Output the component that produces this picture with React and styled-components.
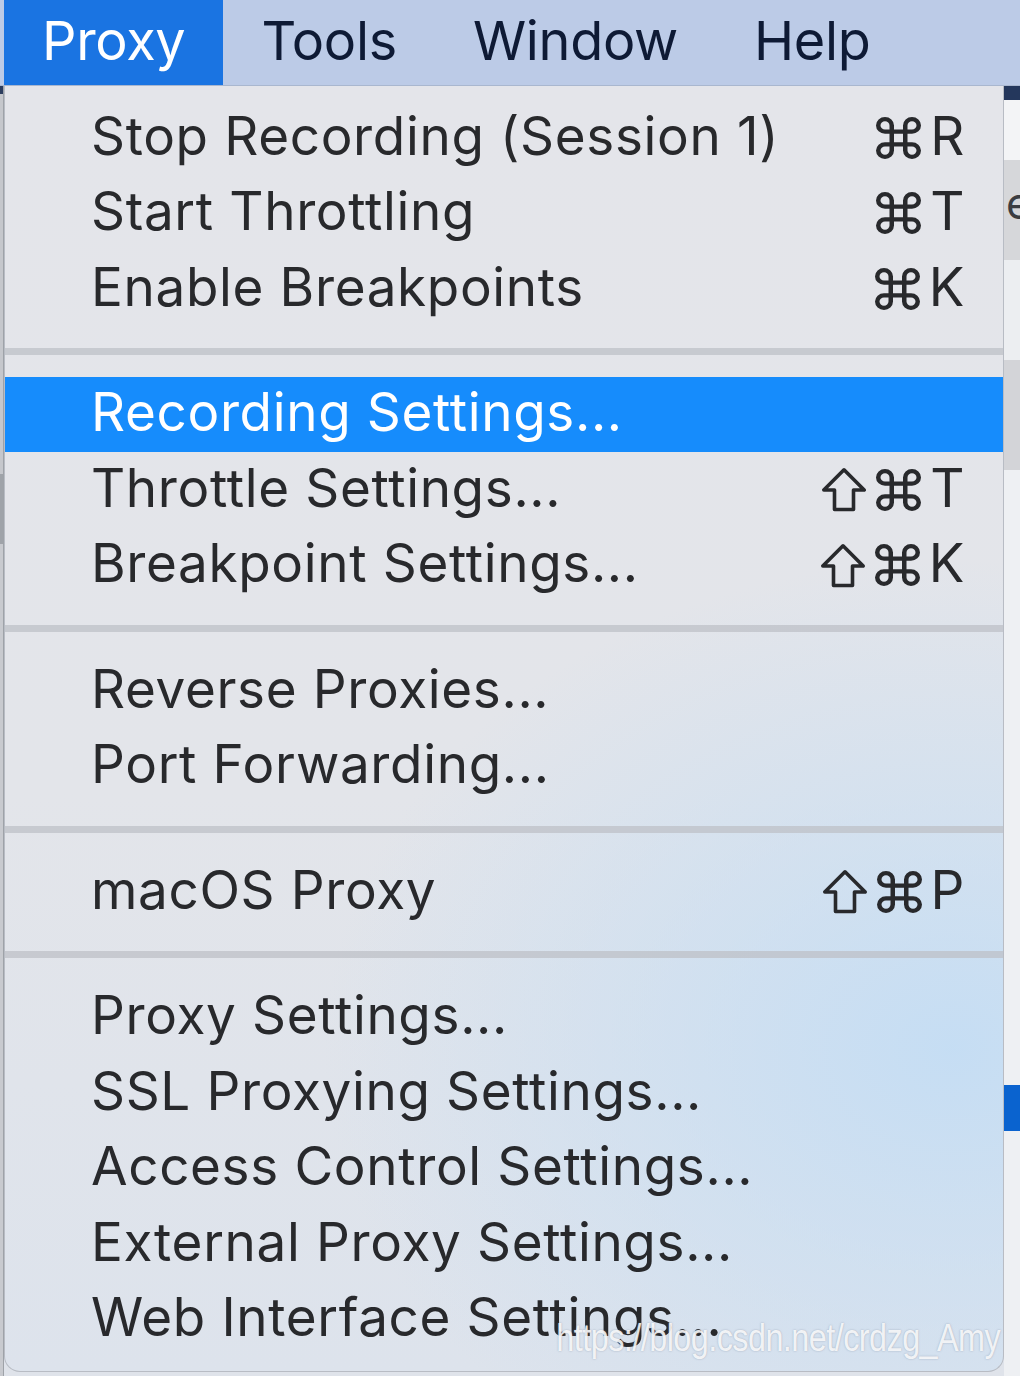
import React from 'react';
import styled, { createGlobalStyle } from 'styled-components';

const GlobalStyle = createGlobalStyle`
  html, body {
    margin: 0;
    padding: 0;
    background: #dfe3ea;
  }
  #root {
    width: 1020px;
    height: 1376px;
    overflow: hidden;
  }
`;

const Screen = styled.div`
  width: 1020px;
  height: 1376px;
  display: flex;
  flex-direction: column;
  font-family: Inter, "Liberation Sans", sans-serif;
  overflow: hidden;
`;

const MenuBar = styled.div`
  height: 86px;
  flex-shrink: 0;
  display: flex;
  align-items: stretch;
  padding-left: 4px;
  background: #bccbe7;
  border-bottom: 1px solid #a9b7cf;
  box-sizing: border-box;
`;

const BarItem = styled.div`
  display: flex;
  align-items: center;
  padding: 0 38px 4px;
  font-size: 54px;
  letter-spacing: -0.3px;
  color: ${p => (p.$active ? '#ffffff' : '#0e1a35')};
  background: ${p => (p.$active ? '#1a74e2' : 'transparent')};
`;

const Body = styled.div`
  flex: 1;
  display: flex;
  min-height: 0;
`;

const LeftStrip = styled.div`
  width: 4px;
  flex-shrink: 0;
  display: flex;
  flex-direction: column;
  background: #c7c9ce;
  border-right: 1px solid #9ea2a8;
  box-sizing: border-box;
`;

const StripBlock = styled.div`
  height: ${p => p.$h}px;
  flex-shrink: 0;
  background: ${p => p.$bg};
`;

const Menu = styled.div`
  width: 1000px;
  flex-shrink: 0;
  height: 1286px;
  box-sizing: border-box;
  padding-top: 14px;
  display: flex;
  flex-direction: column;
  border-radius: 0 0 16px 16px;
  border: 1px solid #b8bcc4;
  border-top: none;
  background:
    radial-gradient(ellipse 900px 700px at 95% 75%, rgba(196, 221, 244, 0.95), rgba(196, 221, 244, 0) 70%),
    linear-gradient(180deg, #e4e5ea 0%, #e3e5ea 55%, #dde3ec 100%);
  overflow: hidden;
`;

const Item = styled.div`
  height: 75.5px;
  flex-shrink: 0;
  display: flex;
  align-items: center;
  justify-content: space-between;
  padding: 0 38px 0 86px;
  box-sizing: border-box;
  font-size: 53px;
  letter-spacing: 0.65px;
  color: ${p => (p.$selected ? '#ffffff' : '#28292c')};
  background: ${p => (p.$selected ? '#168cfc' : 'transparent')};
`;

const Label = styled.span`
  padding-bottom: 4px;
`;

const Shortcut = styled.span`
  display: flex;
  align-items: center;
  gap: 9px;
`;

const KeyLetter = styled.span`
  padding-bottom: 4px;
`;

const Separator = styled.div`
  height: 50px;
  flex-shrink: 0;
  display: flex;
  align-items: center;

  &::after {
    content: '';
    flex: 1;
    height: 7px;
    background: rgba(190, 192, 199, 0.75);
  }
`;

const RightStrip = styled.div`
  flex: 1;
  display: flex;
  flex-direction: column;
  background: #eef0f3;
  position: relative;
`;

const Letter = styled.span`
  position: absolute;
  top: ${p => p.$top}px;
  left: 2px;
  font-size: 44px;
  color: #3b3d42;
`;

const Watermark = styled.div`
  position: absolute;
  right: 4px;
  bottom: 16px;
  font-family: "Liberation Sans Narrow", "Liberation Sans", sans-serif;
  font-size: 38px;
  letter-spacing: -0.6px;
  transform: scaleX(0.85);
  transform-origin: right center;
  white-space: nowrap;
  color: rgba(255, 255, 255, 0.85);
  text-shadow: 0 0 2px rgba(120, 130, 150, 0.6);
`;

const MenuWrap = styled.div`
  position: relative;
  display: flex;
`;

const ShiftIcon = () => (
  <svg width="46" height="45" viewBox="0 0 46 45" fill="none">
    <path
      d="M13.5 42.5V23H2.8L23 2.8 43.2 23H32.5v19.5z"
      stroke="currentColor"
      strokeWidth="3.6"
      strokeLinejoin="round"
    />
  </svg>
);

const CmdIcon = () => (
  <svg width="45" height="42" viewBox="2 2 20 20" preserveAspectRatio="none" fill="none">
    <path
      d="M15 6v12a3 3 0 1 0 3-3H6a3 3 0 1 0 3 3V6a3 3 0 1 0-3 3h12a3 3 0 1 0-3-3"
      stroke="currentColor"
      strokeWidth="2"
      strokeLinecap="round"
      strokeLinejoin="round"
    />
  </svg>
);

const Keys = ({ shift, k }) => (
  <Shortcut>
    {shift && <ShiftIcon />}
    <CmdIcon />
    <KeyLetter>{k}</KeyLetter>
  </Shortcut>
);

const SECTIONS = [
  [
    { label: 'Stop Recording (Session 1)', k: 'R' },
    { label: 'Start Throttling', k: 'T' },
    { label: 'Enable Breakpoints', k: 'K' }
  ],
  [
    { label: 'Recording Settings...', selected: true },
    { label: 'Throttle Settings...', k: 'T', shift: true },
    { label: 'Breakpoint Settings...', k: 'K', shift: true }
  ],
  [
    { label: 'Reverse Proxies...' },
    { label: 'Port Forwarding...' }
  ],
  [{ label: 'macOS Proxy', k: 'P', shift: true }],
  [
    { label: 'Proxy Settings...' },
    { label: 'SSL Proxying Settings...' },
    { label: 'Access Control Settings...' },
    { label: 'External Proxy Settings...' },
    { label: 'Web Interface Settings...' }
  ]
];

const App = () => (
  <Screen>
    <GlobalStyle />
    <MenuBar>
      <BarItem $active>Proxy</BarItem>
      <BarItem>Tools</BarItem>
      <BarItem>Window</BarItem>
      <BarItem>Help</BarItem>
    </MenuBar>
    <Body>
      <LeftStrip>
        <StripBlock $h={8} $bg="#2c3d5e" />
        <StripBlock $h={380} $bg="#c5c7cc" />
        <StripBlock $h={70} $bg="#9fa3a9" />
        <StripBlock $h={828} $bg="#c8cacf" />
      </LeftStrip>
      <MenuWrap>
        <Menu>
          {SECTIONS.map((items, i) => (
            <React.Fragment key={i}>
              {i > 0 && <Separator />}
              {items.map(it => (
                <Item key={it.label} $selected={it.selected}>
                  <Label>{it.label}</Label>
                  {it.k && <Keys shift={it.shift} k={it.k} />}
                </Item>
              ))}
            </React.Fragment>
          ))}
        </Menu>
        <Watermark>https://blog.csdn.net/crdzg_Amy</Watermark>
      </MenuWrap>
      <RightStrip>
        <StripBlock $h={14} $bg="#24375c" />
        <StripBlock $h={60} $bg="#f3f4f6" />
        <StripBlock $h={100} $bg="#d6d7da" />
        <StripBlock $h={100} $bg="#eceef1" />
        <StripBlock $h={110} $bg="#d3d4d8" />
        <StripBlock $h={615} $bg="#eef0f3" />
        <StripBlock $h={46} $bg="#0a63cf" />
        <StripBlock $h={400} $bg="#eef0f3" />
        <Letter $top={90}>e</Letter>
      </RightStrip>
    </Body>
  </Screen>
);

export default App;
